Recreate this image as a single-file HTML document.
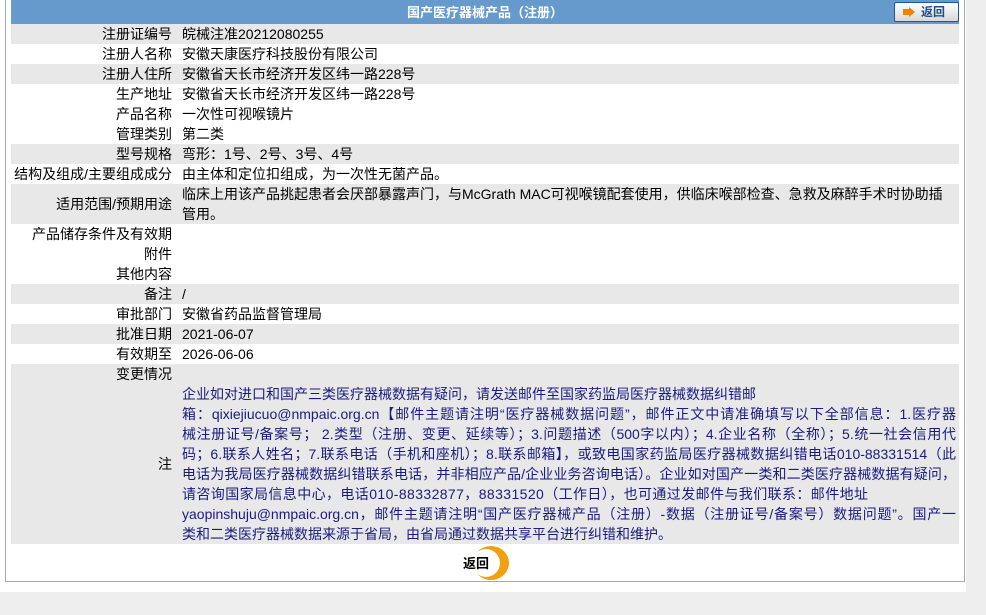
<!DOCTYPE html>
<html><head><meta charset="utf-8"><style>
html,body{margin:0;padding:0;background:#eeeeee;width:986px;height:615px;overflow:hidden;font-family:"Liberation Sans","Noto Sans CJK SC",sans-serif;font-size:14px;color:#000}
#wrap{position:absolute;left:0;top:0;width:966px;height:592px;background:#fff}
#box{position:absolute;left:5px;top:-2px;width:958px;height:583px;border:1px solid #aaa;border-top:none;background:#fff}
#hdr{position:absolute;left:11px;top:0;width:948px;height:24px;background:#6699cc;color:#fff;font-weight:bold;text-align:center;line-height:24px;font-size:13px;font-family:"Noto Sans CJK SC",sans-serif}
table{position:absolute;left:11px;top:24px;width:948px;border-collapse:collapse;table-layout:fixed}
td{padding:0;height:20px;line-height:20px;vertical-align:middle}
td.l{width:161px;text-align:right;padding-right:10px;white-space:nowrap}
td.v{padding-left:0;white-space:nowrap;overflow:hidden}
tr.g td{background:#e8e8e8}
.note{color:#1a1a80;line-height:20px;padding:0!important}
.note div{width:774px;white-space:nowrap}
.note div.j{text-align:justify;text-align-last:justify}
#btn{position:absolute;left:894px;top:2px;width:63px;height:18px;border:1px solid #1d5a9c;border-radius:2px;background:linear-gradient(#fff,#d8d8d8);color:#1d4f8c;font-weight:bold;font-size:12px;line-height:18px;font-family:"Noto Sans CJK SC",sans-serif}
#btn .ar{position:absolute;left:8px;top:6px;width:6px;height:6px;background:#e8850a}
#btn .ah{position:absolute;left:14px;top:4px;border-left:6px solid #e8850a;border-top:5px solid transparent;border-bottom:5px solid transparent}
#btn span{position:absolute;left:26px;top:0}
#ret{position:absolute;left:473px;top:546px;width:36px;height:34px;border-radius:50%;background:#f0a010}
#ret2{position:absolute;left:472px;top:549px;width:28px;height:28px;border-radius:50%;background:#fff}
#rett{position:absolute;left:463px;top:555px;font-weight:bold;font-size:13px;line-height:16px;font-family:"Noto Sans CJK SC",sans-serif}
</style></head><body>
<div id="wrap"></div>
<div id="box"></div>
<div id="hdr">国产医疗器械产品（注册）</div>
<div id="btn"><div class="ar"></div><div class="ah"></div><span>返回</span></div>
<table>
<tr class="g"><td class="l">注册证编号</td><td class="v">皖械注准20212080255</td></tr>
<tr><td class="l">注册人名称</td><td class="v">安徽天康医疗科技股份有限公司</td></tr>
<tr class="g"><td class="l">注册人住所</td><td class="v">安徽省天长市经济开发区纬一路228号</td></tr>
<tr><td class="l">生产地址</td><td class="v">安徽省天长市经济开发区纬一路228号</td></tr>
<tr><td class="l">产品名称</td><td class="v">一次性可视喉镜片</td></tr>
<tr><td class="l">管理类别</td><td class="v">第二类</td></tr>
<tr class="g"><td class="l">型号规格</td><td class="v">弯形：1号、2号、3号、4号</td></tr>
<tr><td class="l">结构及组成/主要组成成分</td><td class="v">由主体和定位扣组成，为一次性无菌产品。</td></tr>
<tr class="g"><td class="l" style="height:40px">适用范围/预期用途</td><td class="v">临床上用该产品挑起患者会厌部暴露声门，与McGrath MAC可视喉镜配套使用，供临床喉部检查、急救及麻醉手术时协助插<br>管用。</td></tr>
<tr><td class="l">产品储存条件及有效期</td><td class="v"></td></tr>
<tr><td class="l">附件</td><td class="v"></td></tr>
<tr><td class="l">其他内容</td><td class="v"></td></tr>
<tr class="g"><td class="l">备注</td><td class="v">/</td></tr>
<tr><td class="l">审批部门</td><td class="v">安徽省药品监督管理局</td></tr>
<tr class="g"><td class="l">批准日期</td><td class="v">2021-06-07</td></tr>
<tr><td class="l">有效期至</td><td class="v">2026-06-06</td></tr>
<tr class="g"><td class="l">变更情况</td><td class="v"></td></tr>
<tr class="g"><td class="l">注</td><td class="v note"><div>企业如对进口和国产三类医疗器械数据有疑问，请发送邮件至国家药监局医疗器械数据纠错邮</div><div class="j">箱：qixiejiucuo@nmpaic.org.cn【邮件主题请注明“医疗器械数据问题”，邮件正文中请准确填写以下全部信息：1.医疗器</div><div class="j">械注册证号/备案号； 2.类型（注册、变更、延续等）；3.问题描述（500字以内）；4.企业名称（全称）；5.统一社会信用代</div><div class="j">码；6.联系人姓名；7.联系电话（手机和座机）；8.联系邮箱】，或致电国家药监局医疗器械数据纠错电话010-88331514（此</div><div class="j">电话为我局医疗器械数据纠错联系电话，并非相应产品/企业业务咨询电话）。企业如对国产一类和二类医疗器械数据有疑问，</div><div style="letter-spacing:0.4px">请咨询国家局信息中心，电话010-88332877，88331520（工作日），也可通过发邮件与我们联系：邮件地址</div><div class="j">yaopinshuju@nmpaic.org.cn，邮件主题请注明“国产医疗器械产品（注册）-数据（注册证号/备案号）数据问题”。国产一</div><div>类和二类医疗器械数据来源于省局，由省局通过数据共享平台进行纠错和维护。</div></td></tr>
</table>
<div id="ret"></div><div id="ret2"></div>
<div id="rett">返回</div>
</body></html>
